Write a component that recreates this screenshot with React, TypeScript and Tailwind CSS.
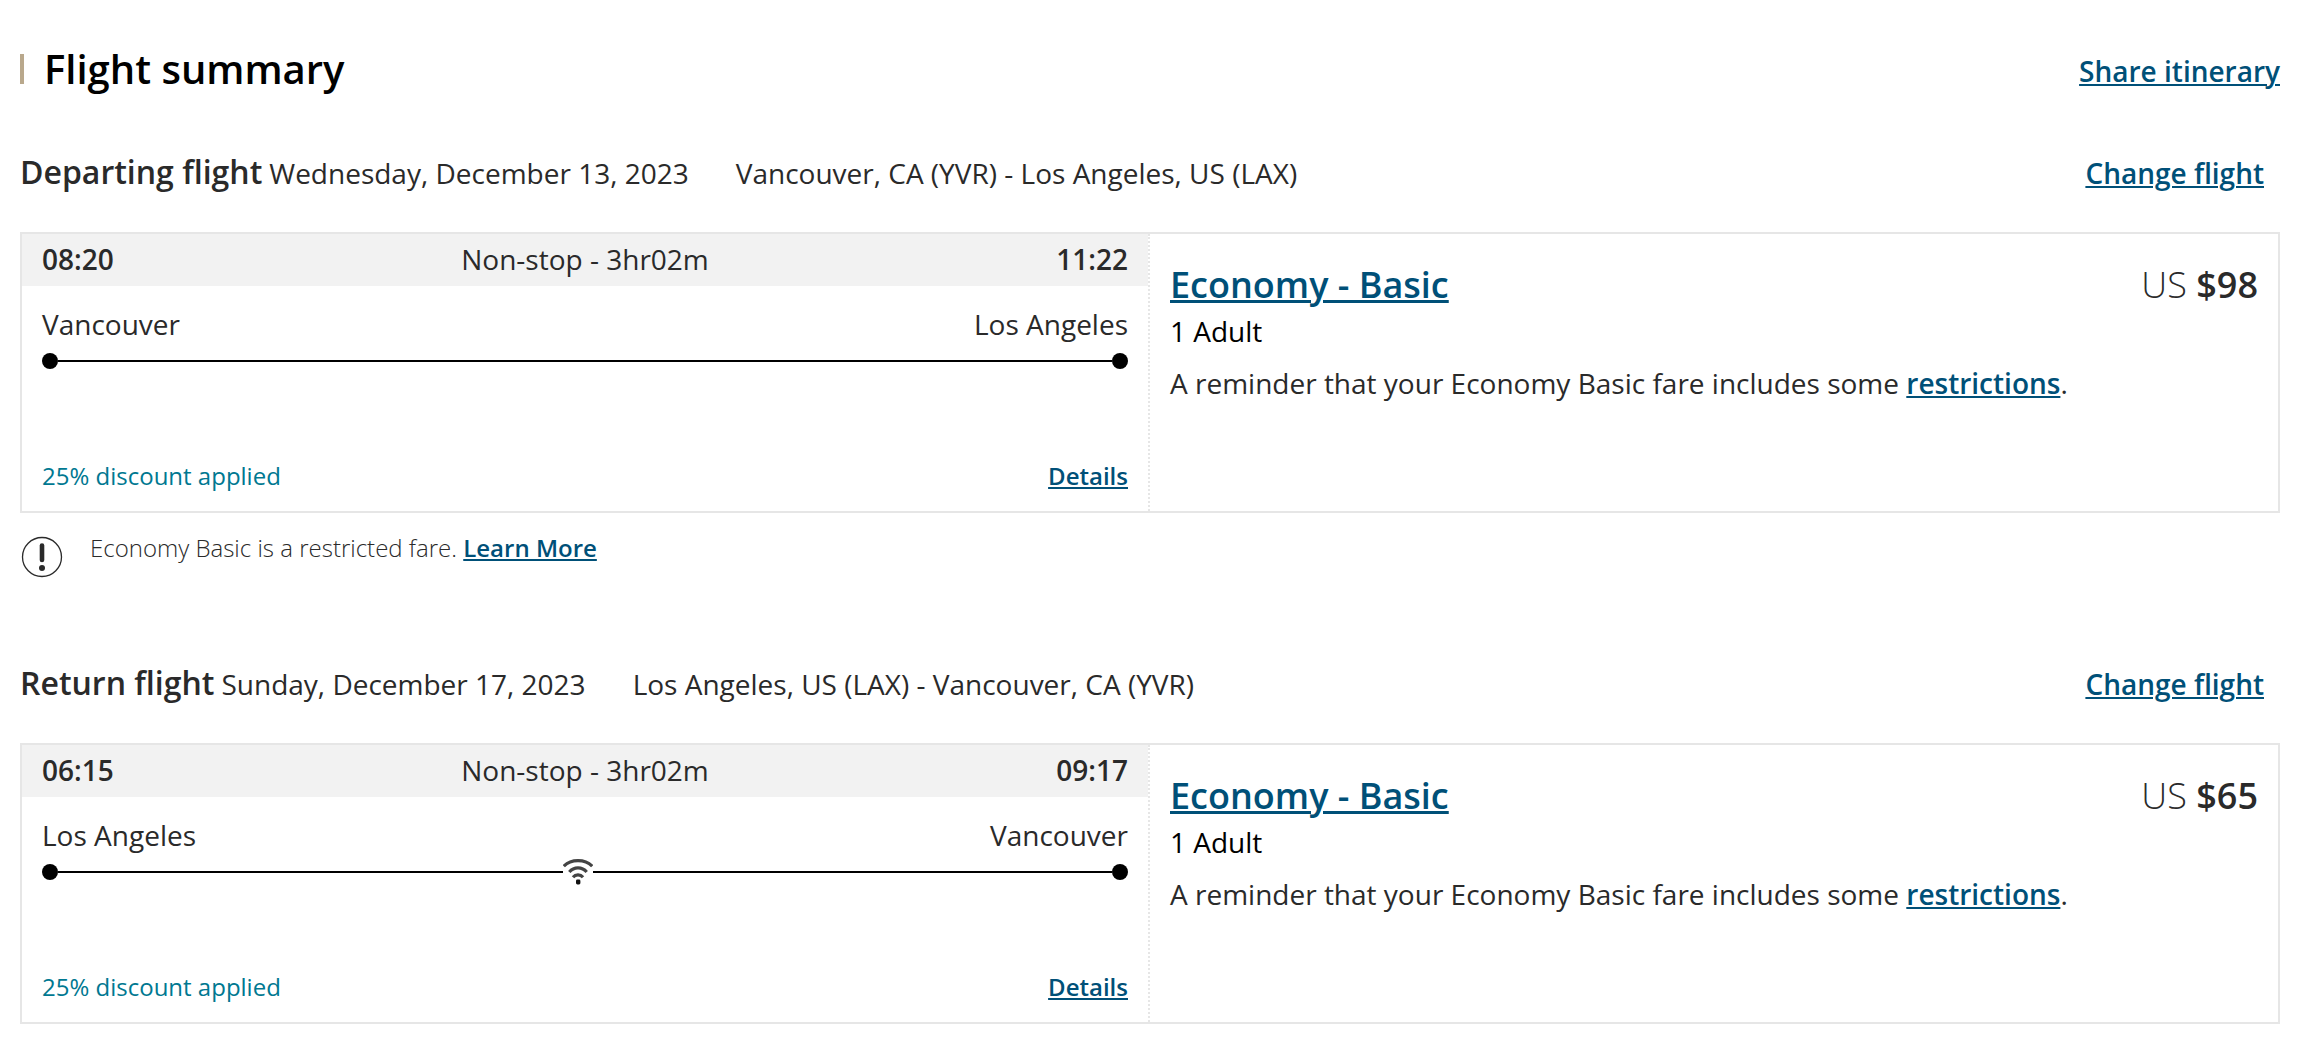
import React from 'react';

interface Flight {
  id: string;
  label: string;
  date: string;
  route: string;
  departTime: string;
  arriveTime: string;
  duration: string;
  from: string;
  to: string;
  hasWifi: boolean;
  discount: string;
  fare: string;
  price: string;
  showNotice: boolean;
}

const flights: Flight[] = [
  {
    id: 'departing',
    label: 'Departing flight',
    date: 'Wednesday, December 13, 2023',
    route: 'Vancouver, CA (YVR) - Los Angeles, US (LAX)',
    departTime: '08:20',
    arriveTime: '11:22',
    duration: 'Non-stop - 3hr02m',
    from: 'Vancouver',
    to: 'Los Angeles',
    hasWifi: false,
    discount: '25% discount applied',
    fare: 'Economy - Basic',
    price: '$98',
    showNotice: true,
  },
  {
    id: 'return',
    label: 'Return flight',
    date: 'Sunday, December 17, 2023',
    route: 'Los Angeles, US (LAX) - Vancouver, CA (YVR)',
    departTime: '06:15',
    arriveTime: '09:17',
    duration: 'Non-stop - 3hr02m',
    from: 'Los Angeles',
    to: 'Vancouver',
    hasWifi: true,
    discount: '25% discount applied',
    fare: 'Economy - Basic',
    price: '$65',
    showNotice: false,
  },
];

const WifiIcon: React.FC = () => (
  <svg width="30" height="28" viewBox="0 0 30 28" fill="none" stroke="#444444" strokeWidth="3.2" aria-label="Wi-Fi available">
    <path d="M0.8 8.2 C8 0.8 22 0.8 29.2 8.2" />
    <path d="M6.3 14 C11 8.6 19 8.6 23.7 14" />
    <path d="M10 19.2 C12.5 16.2 17.5 16.2 20 19.2" />
    <rect x="13" y="21.5" width="4.4" height="5" rx="1.4" fill="#111111" stroke="none" />
  </svg>
);

const NoticeIcon: React.FC = () => (
  <svg className="shrink-0" width="42" height="42" viewBox="0 0 42 42" fill="none" aria-hidden="true">
    <circle cx="21" cy="21" r="19.5" stroke="#2a2a2a" strokeWidth="1.3" />
    <path d="M21 9.5 V24" stroke="#2a2a2a" strokeWidth="4.6" strokeLinecap="round" />
    <circle cx="21" cy="32" r="3" fill="#2a2a2a" />
  </svg>
);

interface TextLinkProps {
  className?: string;
  children: React.ReactNode;
}

const TextLink: React.FC<TextLinkProps> = ({ className = 'decoration-2', children }) => (
  <a href="#" className={`font-semibold text-[#005078] underline underline-offset-2 ${className}`}>
    {children}
  </a>
);

const FlightCard: React.FC<{ flight: Flight }> = ({ flight }) => (
  <div className="grid grid-cols-2 border-2 border-[#e6e6e6]">
    {/* Schedule */}
    <div className="border-r-2 border-dotted border-[#e6e6e6]">
      <div className="flex justify-between bg-[#f2f2f2] px-5 pt-[5px] pb-[7px]">
        <span className="font-semibold">{flight.departTime}</span>
        <span>{flight.duration}</span>
        <span className="font-semibold">{flight.arriveTime}</span>
      </div>
      <div className="px-5 pt-[18px] pb-[19px]">
        <div className="flex justify-between">
          <span>{flight.from}</span>
          <span>{flight.to}</span>
        </div>
        <div className="relative mt-[9px] flex items-center">
          <span className="size-4 rounded-full bg-black" />
          <span className="h-[2px] grow bg-black" />
          <span className="size-4 rounded-full bg-black" />
          {flight.hasWifi && (
            <span className="absolute -top-[6px] left-[48%] bg-white">
              <WifiIcon />
            </span>
          )}
        </div>
        <div className="mt-[91px] flex justify-between text-2xl">
          <span className="text-[#007891]">{flight.discount}</span>
          <TextLink>Details</TextLink>
        </div>
      </div>
    </div>

    {/* Fare */}
    <div className="px-5 pt-[27px]">
      <div className="flex justify-between text-4xl leading-12">
        <TextLink className="decoration-3">{flight.fare}</TextLink>
        <p className="font-light">
          US <strong className="font-semibold">{flight.price}</strong>
        </p>
      </div>
      <p className="mt-[2px] text-black">1 Adult</p>
      <p className="mt-3">
        A reminder that your Economy Basic fare includes some <TextLink>restrictions</TextLink>.
      </p>
    </div>
  </div>
);

const App: React.FC = () => {
  return (
    <main className="bg-white px-5 pt-[41px] pr-[26px] pb-4 font-['Open_Sans',sans-serif] text-[28px] leading-10 text-[#2a2a2a]">
      <header className="flex items-center justify-between">
        <div className="flex items-center gap-5">
          <span className="h-[30px] w-1 bg-[#b9a88c]" />
          <h1 className="text-[40px] leading-14 font-semibold text-black">Flight summary</h1>
        </div>
        <TextLink className="pt-1 decoration-2">Share itinerary</TextLink>
      </header>

      <div className="mt-[55px] flex flex-col gap-[85px]">
        {flights.map((flight) => (
          <section key={flight.id}>
            <div className="flex items-baseline pr-4">
              <h2 className="text-[32px] leading-10 font-semibold">{flight.label}</h2>
              <span className="ml-[7px]">{flight.date}</span>
              <span className="ml-[47px]">{flight.route}</span>
              <TextLink className="ml-auto decoration-2">Change flight</TextLink>
            </div>
            <div className="mt-[39px]">
              <FlightCard flight={flight} />
            </div>
            {flight.showNotice && (
              <div className="mt-[19px] flex gap-[27px]">
                <div className="pt-1 pl-px">
                  <NoticeIcon />
                </div>
                <p className="text-2xl font-light">
                  Economy Basic is a restricted fare. <TextLink>Learn More</TextLink>
                </p>
              </div>
            )}
          </section>
        ))}
      </div>
    </main>
  );
};

export default App;
